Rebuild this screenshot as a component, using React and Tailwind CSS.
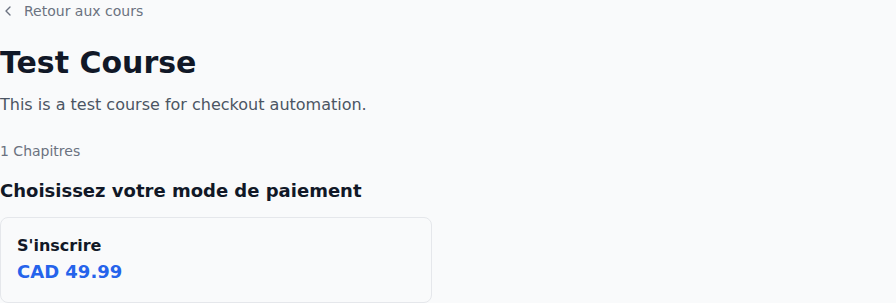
import React from "react";
import { ChevronLeft } from "lucide-react";

export default function App() {
  return (
    <div className="min-h-screen bg-[#f9fafb] font-['DejaVu_Sans',sans-serif]">
      <div className="pt-px">
        <a href="#" className="flex items-center gap-2 text-sm text-[#6b7280]">
          <ChevronLeft className="w-4 h-4" strokeWidth={2} />
          Retour aux cours
        </a>

        <h1 className="mt-6 text-3xl font-bold text-[#111827]">Test Course</h1>
        <p className="mt-3 text-base text-[#4b5563]">This is a test course for checkout automation.</p>

        <p className="mt-6 text-sm text-[#6b7280]">1 Chapitres</p>

        <h2 className="mt-4 text-lg font-semibold text-[#111827]">Choisissez votre mode de paiement</h2>

        <div className="mt-3 grid grid-cols-2 gap-8">
          <div className="rounded-lg border border-[#e5e7eb] bg-[#f9fafb] p-4">
            <div className="text-base font-semibold text-[#111827]">S'inscrire</div>
            <div className="text-lg font-bold text-[#2563eb]">CAD 49.99</div>
          </div>
        </div>
      </div>
    </div>
  );
}
